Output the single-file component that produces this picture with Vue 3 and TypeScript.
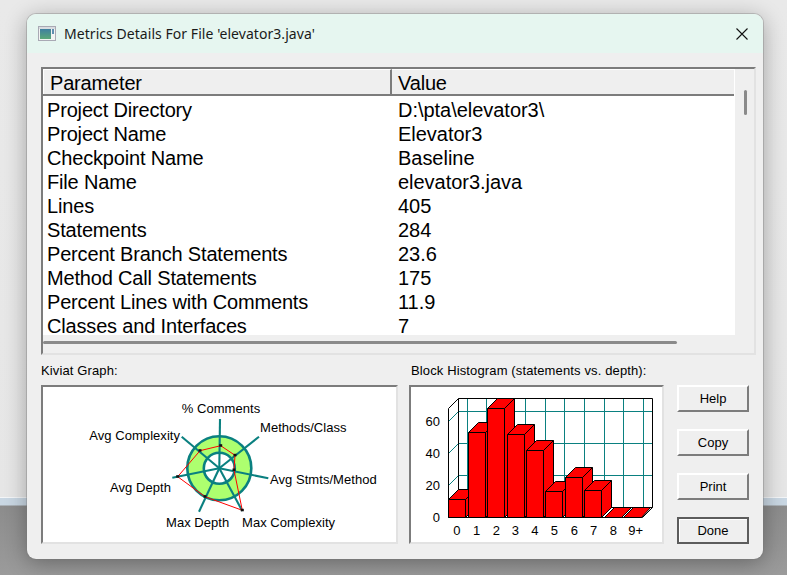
<script setup lang="ts">
interface Metric { name: string; value: string }
const metrics: Metric[] = [
  { name: 'Project Directory', value: 'D:\\pta\\elevator3\\' },
  { name: 'Project Name', value: 'Elevator3' },
  { name: 'Checkpoint Name', value: 'Baseline' },
  { name: 'File Name', value: 'elevator3.java' },
  { name: 'Lines', value: '405' },
  { name: 'Statements', value: '284' },
  { name: 'Percent Branch Statements', value: '23.6' },
  { name: 'Method Call Statements', value: '175' },
  { name: 'Percent Lines with Comments', value: '11.9' },
  { name: 'Classes and Interfaces', value: '7' },
]
const cx = 219.3
const cy = 468.3
const axes: [number, number][] = [
  [220, 419], [259, 436.7], [268.3, 478.3], [242.3, 511], [199, 511.7], [172.3, 477.7], [181.7, 436.7],
]
const poly: [number, number][] = [
  [220.7, 445.7], [235, 455.3], [234, 470], [242.3, 510.3], [205, 496.7], [177.7, 476.7], [200, 450.7],
]
const polyPoints = poly.map(p => p.join(',')).join(' ')
const kLabels = [
  { t: '% Comments', x: 181.7, y: 413 },
  { t: 'Methods/Class', x: 260, y: 432 },
  { t: 'Avg Complexity', x: 89.3, y: 440 },
  { t: 'Avg Stmts/Method', x: 270, y: 484 },
  { t: 'Avg Depth', x: 110, y: 492 },
  { t: 'Max Depth', x: 166, y: 527 },
  { t: 'Max Complexity', x: 242, y: 527 },
]
const snap = (v: number) => Math.floor(v) + 0.5
const X = (z: number) => snap(400 + z / 3)
const Y = (z: number) => snap(355 + z / 3)
const barData: [number, number, number][] = [
  [145, 197, 433], [205, 257, 232], [263, 314, 160], [323, 374, 238], [380, 431, 286],
  [437, 488, 409], [496, 548, 367], [554, 605, 406],
]
const bars = barData.map(([l, r, t]) => {
  const x0 = X(l), x1 = X(r), y0 = Y(t), y1 = Y(487)
  const top = Math.max(y0 - 10, 398.5)
  const d = y0 - top
  return {
    front: `${x0},${y0} ${x1},${y0} ${x1},${y1} ${x0},${y1}`,
    top: `${x0},${y0} ${x0 + d},${top} ${x1 + 10},${top} ${x1 + 10},${y1 - 10} ${x1},${y1} ${x1},${y0}`,
    side: `M${x1} ${y0} L${x1 + d} ${top}`,
  }
})
const flats = [
  `${X(612)},${Y(487)} ${X(642)},${Y(458)} ${X(694)},${Y(458)} ${X(664)},${Y(487)}`,
  `${X(670)},${Y(487)} ${X(700)},${Y(458)} ${X(752)},${Y(458)} ${X(724)},${Y(487)}`,
]
const gridV = [202, 260, 318, 377, 436, 494, 553, 612, 670, 730].map(X)
const gridH = [168, 265, 361].map(Y)
const walls = [[198, 168], [295, 265], [390, 361]].map(([a, b]) => [Y(a), Y(b)])
const yLabels = [
  { t: '60', y: 425.5 }, { t: '40', y: 457.5 }, { t: '20', y: 489.5 }, { t: '0', y: 521.5 },
]
const xLabels = [
  { t: '0', x: 457 }, { t: '1', x: 476.7 }, { t: '2', x: 496.3 }, { t: '3', x: 515.3 }, { t: '4', x: 535 },
  { t: '5', x: 554.3 }, { t: '6', x: 574.3 }, { t: '7', x: 593.7 }, { t: '8', x: 613.3 }, { t: '9+', x: 635.7 },
]
const buttons = ['Help', 'Copy', 'Print', 'Done']
</script>

<template>
  <div class="desktop">
    <section class="window">
      <header class="titlebar">
        <svg class="app-icon" width="18" height="15" viewBox="0 0 18 15">
          <defs>
            <linearGradient id="iconFill" x1="0" y1="0" x2="0" y2="1">
              <stop offset="0" stop-color="#3f80a0" />
              <stop offset="1" stop-color="#5aa878" />
            </linearGradient>
          </defs>
          <rect x="0.5" y="0.5" width="17" height="14" fill="#f2f4f2" stroke="#a9a9b4" />
          <rect x="1" y="1" width="16" height="2" fill="#d9dce0" />
          <rect x="2" y="3" width="11" height="10" fill="url(#iconFill)" />
          <rect x="14" y="3" width="2" height="5" fill="#5f8fb0" />
        </svg>
        <span class="title">Metrics Details For File 'elevator3.java'</span>
        <svg class="close" width="12" height="12" viewBox="0 0 12 12">
          <path d="M0.5 0.5 L11.5 11.5 M11.5 0.5 L0.5 11.5" stroke="#111" stroke-width="1.1" fill="none" />
        </svg>
      </header>

      <div class="body">
        <div class="list">
          <div class="list-main">
            <div class="list-head">
              <div class="head-cell col-a">Parameter</div>
              <div class="head-cell col-b">Value</div>
            </div>
            <div class="list-rows">
              <div v-for="m in metrics" :key="m.name" class="row">
                <span class="cell-a">{{ m.name }}</span>
                <span class="cell-b">{{ m.value }}</span>
              </div>
            </div>
          </div>
          <div class="vscroll"><div class="vthumb"></div></div>
          <div class="hscroll"><div class="hthumb"></div></div>
        </div>

        <div class="lower">
          <div class="chart-col kiviat-col">
            <div class="caption">Kiviat Graph:</div>
            <div class="chart-box">
              <svg class="chart" width="353" height="155" viewBox="43 387 353 155">
                <circle :cx="cx" :cy="cy" r="23.5" fill="none" stroke="#adff6f" stroke-width="17" />
                <circle :cx="cx" :cy="cy" r="32" fill="none" stroke="#0a8080" stroke-width="2.6" />
                <circle :cx="cx" :cy="cy" r="15.5" fill="none" stroke="#0a8080" stroke-width="2.6" />
                <line v-for="(a, i) in axes" :key="i" :x1="cx" :y1="cy" :x2="a[0]" :y2="a[1]" stroke="#0a8080" stroke-width="2.1" />
                <polygon :points="polyPoints" fill="none" stroke="#ff0000" stroke-width="1" />
                <rect v-for="(p, i) in poly" :key="'d' + i" :x="p[0] - 1.5" :y="p[1] - 1.5" width="3" height="2.5" fill="#111" />
                <text v-for="l in kLabels" :key="l.t" :x="l.x" :y="l.y" class="chart-text">{{ l.t }}</text>
              </svg>
            </div>
          </div>

          <div class="chart-col hist-col">
            <div class="caption">Block Histogram (statements vs. depth):</div>
            <div class="chart-box">
              <svg class="chart" width="251" height="155" viewBox="411 387 251 155">
                <line v-for="x in gridV" :key="'v' + x" :x1="x" y1="398.5" :x2="x" y2="507.5" stroke="#0a8080" />
                <line v-for="y in gridH" :key="'h' + y" x1="458.5" :y1="y" x2="652.5" :y2="y" stroke="#0a8080" />
                <line v-for="(w, i) in walls" :key="'w' + i" x1="448.5" :y1="w[0]" x2="458.5" :y2="w[1]" stroke="#0a8080" />
                <path d="M458.5 398.5 H652.5 V507.5 L642.5 517.5 H448.5 V408.5 L458.5 398.5 V507.5 H652.5 M458.5 507.5 L448.5 517.5" fill="none" stroke="#000" />
                <g v-for="(b, i) in bars" :key="'b' + i">
                  <polygon :points="b.top" fill="#ff0000" stroke="#000" stroke-width="1" />
                  <path :d="b.side" stroke="#000" fill="none" />
                  <polygon :points="b.front" fill="#ff0000" stroke="#000" stroke-width="1" />
                </g>
                <polygon v-for="(f, i) in flats" :key="'f' + i" :points="f" fill="#ff0000" stroke="#000" />
                <text v-for="l in yLabels" :key="'y' + l.t" x="440" :y="l.y" text-anchor="end" class="chart-text">{{ l.t }}</text>
                <text v-for="l in xLabels" :key="'x' + l.t" :x="l.x" y="535" text-anchor="middle" class="chart-text">{{ l.t }}</text>
              </svg>
            </div>
          </div>

          <div class="actions">
            <button v-for="b in buttons" :key="b" type="button" class="btn" :class="{ primary: b === 'Done' }">{{ b }}</button>
          </div>
        </div>
      </div>
    </section>
  </div>
</template>

<style>
html, body { margin: 0; padding: 0; overflow: hidden; }
</style>

<style scoped>
.desktop {
  width: 787px;
  height: 575px;
  box-sizing: border-box;
  padding: 14px 24px 16px 27px;
  overflow: hidden;
  background: linear-gradient(to bottom, #e9e9e9 0, #e6e6e6 497px, #f4f6f8 497px, #f4f6f8 498px, #c9d7e3 498px, #c9d7e3 505px, #8c8c8c 506px, #9b9b9b 575px);
  font-family: "Liberation Sans", Arial, sans-serif;
  color: #000;
}
.window {
  width: 736px;
  height: 545px;
  box-sizing: border-box;
  border-radius: 9px;
  background: #efefef;
  box-shadow: 0 0 0 1px rgba(120, 120, 120, 0.35), 0 4px 22px rgba(0, 0, 0, 0.32);
  overflow: hidden;
  display: flex;
  flex-direction: column;
}
.titlebar {
  height: 39px;
  flex: none;
  background: #e6f6f0;
  display: flex;
  align-items: center;
  padding: 0 15px 0 11px;
}
.app-icon { flex: none; margin-right: 8px; }
.title {
  flex: 1;
  font-family: "Noto Sans", "Open Sans", sans-serif;
  font-size: 14px;
  letter-spacing: 0.05px;
  color: #1a1a1a;
  white-space: nowrap;
}
.close { flex: none; }
.body {
  flex: 1;
  padding: 14px 7px 15px 14px;
  display: flex;
  flex-direction: column;
}
.list {
  width: 715px;
  height: 288px;
  box-sizing: border-box;
  border: 2px solid;
  border-color: #7c7c7c #e2e2e2 #e2e2e2 #7c7c7c;
  display: grid;
  grid-template-columns: 691px 1fr;
  grid-template-rows: 266px 1fr;
  background: #efefef;
}
.list-main { display: flex; flex-direction: column; min-height: 0; overflow: hidden; }
.list-head {
  height: 27px;
  flex: none;
  display: flex;
  box-sizing: border-box;
  border-bottom: 2px solid #7c7c7c;
  font-size: 20px;
  letter-spacing: -0.17px;
}
.head-cell {
  display: flex;
  align-items: center;
  box-sizing: border-box;
  border-top: 1px solid #fff;
  padding-top: 2px;
}
.col-a {
  width: 349px;
  padding-left: 6px;
  border-right: 2px solid #7c7c7c;
  border-left: 1px solid #fff;
}
.col-b { flex: 1; padding-left: 6px; }
.list-rows {
  flex: 1;
  background: #fff;
  padding-top: 2px;
  overflow: hidden;
}
.row {
  height: 24px;
  display: flex;
  align-items: center;
  font-size: 20px;
  letter-spacing: -0.17px;
  white-space: nowrap;
}
.cell-a { width: 351px; padding-left: 4px; box-sizing: border-box; flex: none; }
.cell-b { padding-left: 4px; letter-spacing: -0.03px; }
.vscroll { position: relative; border-left: 1px solid #fff; padding: 21px 0 0 9px; box-sizing: border-box; }
.vthumb { width: 3px; height: 25px; border-radius: 2px; background: #8a8a8a; }
.hscroll { grid-column: 1 / 3; padding-top: 6px; box-sizing: border-box; }
.hthumb { width: 634px; height: 3px; border-radius: 2px; background: #8a8a8a; }
.lower {
  display: flex;
  margin-top: 8px;
}
.chart-col { display: flex; flex-direction: column; }
.kiviat-col { width: 357px; margin-right: 11px; }
.hist-col { width: 255px; margin-right: 13px; }
.caption {
  height: 22px;
  font-size: 13px;
  line-height: 16px;
  letter-spacing: 0.13px;
  white-space: nowrap;
}
.hist-col .caption { padding-left: 2px; }
.chart-box {
  height: 159px;
  box-sizing: border-box;
  border: 2px solid;
  border-color: #7c7c7c #e2e2e2 #e2e2e2 #7c7c7c;
  background: #fff;
}
.chart { display: block; }
.chart-text {
  font-family: "Liberation Sans", Arial, sans-serif;
  font-size: 13px;
  letter-spacing: 0.05px;
  fill: #000;
}
.actions {
  padding-top: 22px;
  display: flex;
  flex-direction: column;
  gap: 17px;
}
.btn {
  width: 72px;
  height: 27px;
  box-sizing: border-box;
  padding: 0;
  background: #efefef;
  border: 2px solid;
  border-color: #fff #7c7c7c #7c7c7c #fff;
  font-family: "Liberation Sans", Arial, sans-serif;
  font-size: 13px;
  color: #000;
}
.btn.primary {
  border: 2px solid;
  border-color: #5c5c5c;
  box-shadow: inset 1px 1px 0 #fff;
}
</style>
